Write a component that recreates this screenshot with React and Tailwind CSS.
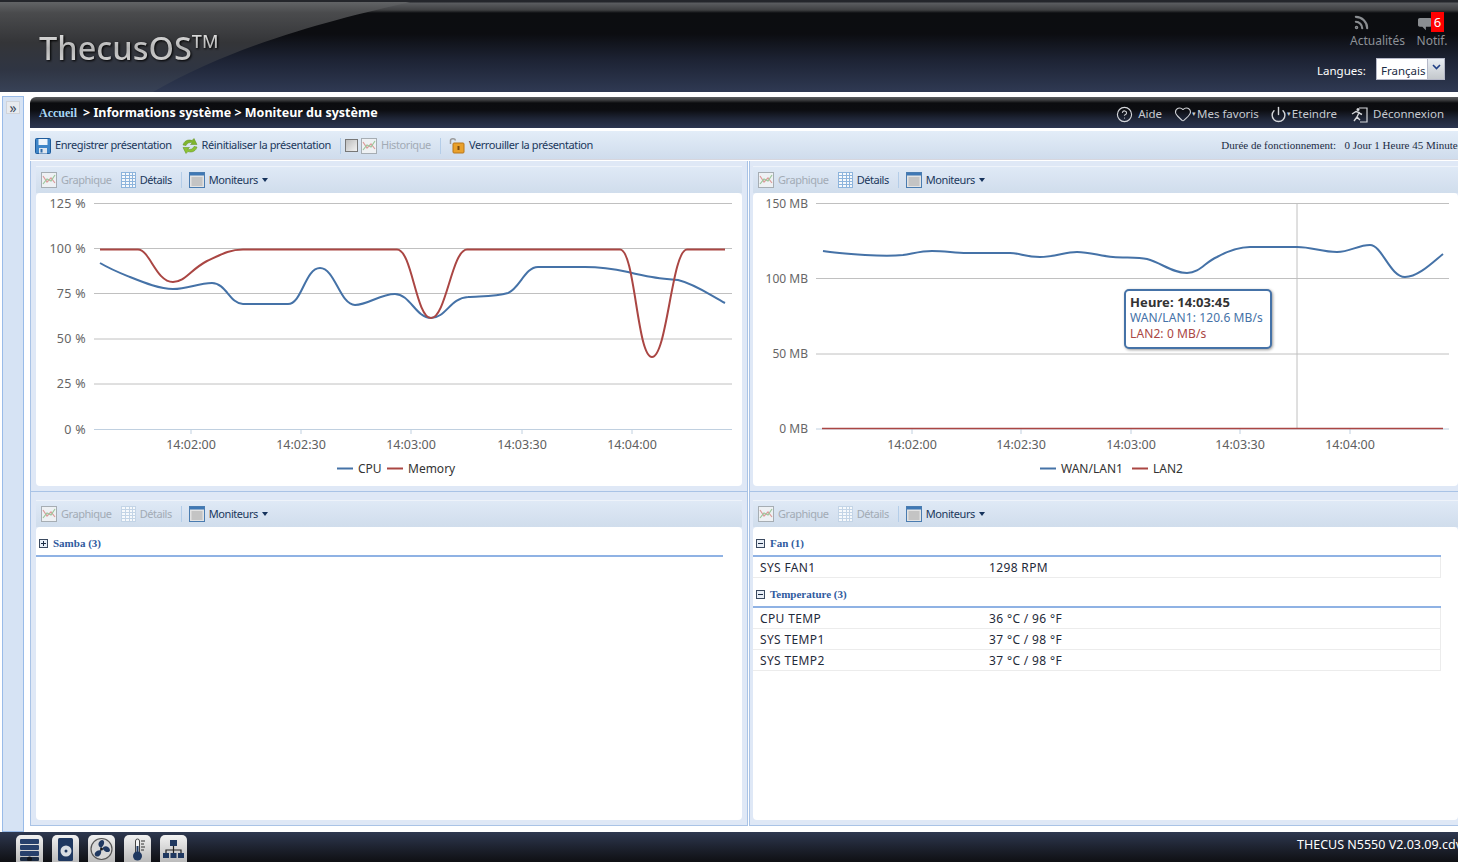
import { CircleHelp, Heart, Power, Rss } from 'lucide-react';

const sans = "[font-family:'Noto_Sans',sans-serif]";

function FloppyIcon() {
  return (
    <svg width="16" height="16" viewBox="0 0 16 16" className="shrink-0">
      <rect x="0.5" y="0.5" width="15" height="15" rx="1" fill="#3f86c8" stroke="#1f5c9c" />
      <rect x="3.5" y="1" width="9" height="6" fill="#eef5fb" />
      <rect x="4" y="10" width="8" height="5.5" fill="#dfe6ee" />
      <rect x="5.5" y="11" width="2" height="3.5" fill="#2f6aa8" />
    </svg>
  );
}

function RefreshIcon() {
  return (
    <svg width="16" height="16" viewBox="0 0 16 16" className="shrink-0">
      <path d="M1 7C2 3 6 1 10 2.5L12 0.5L15 6.5L8.500 6.500L10.300 4.800C7.500 4 5 5 4 7.500Z" fill="#7fb52d" stroke="#5c8f1c" strokeWidth="0.5" />
      <path d="M15 9C14 13 10 15 6 13.500L4 15.500L1 9.500L7.500 9.500L5.700 11.200C8.500 12 11 11 12 8.500Z" fill="#8cc234" stroke="#5c8f1c" strokeWidth="0.5" />
    </svg>
  );
}

function ChartIcon() {
  return (
    <svg width="16" height="16" viewBox="0 0 16 16" className="shrink-0">
      <rect x="0.5" y="0.5" width="15" height="15" fill="#eef1f4" stroke="#a6adb3" />
      <path d="M2 4L6 10L10 6L14 11" fill="none" stroke="#dd9a9a" strokeWidth="1.200" />
      <path d="M2 12L6 7L10 9L14 3" fill="none" stroke="#9cc79c" strokeWidth="1.200" />
    </svg>
  );
}

function GridIcon({ disabled }) {
  const line = disabled ? '#c3d4e6' : '#8db4dc';
  return (
    <svg width="15" height="16" viewBox="0 0 15 16" className="shrink-0">
      <rect x="0.5" y="0.5" width="14" height="15" fill="#f6f9fc" stroke={line} />
      <path d="M0.500 3.500H14.500M0.500 6.500H14.500M0.500 9.500H14.500M0.500 12.500H14.500M4.500 0.500V15.500M8.500 0.500V15.500M11.500 0.500V15.500" stroke={line} />
    </svg>
  );
}

function WindowIcon() {
  return (
    <svg width="16" height="16" viewBox="0 0 16 16" className="shrink-0">
      <rect x="0.5" y="0.5" width="15" height="15" fill="#e3e3e3" stroke="#4a7cb0" />
      <rect x="1" y="1" width="14" height="2.500" fill="#3f78b5" />
      <rect x="2.500" y="5" width="11" height="9" fill="#c4c4c4" />
    </svg>
  );
}

function LockIcon() {
  return (
    <svg width="16" height="17" viewBox="0 0 16 17" className="shrink-0">
      <path d="M1.500 7V3.500C1.500 1.500 6 1 6.500 3.500" fill="none" stroke="#9a9a9a" strokeWidth="1.500" />
      <rect x="4" y="6" width="11" height="10" rx="1" fill="#e9a12c" stroke="#b9761a" />
      <rect x="8.500" y="9" width="2" height="4" fill="#7a4a10" />
    </svg>
  );
}

function ToolButton({ icon, label, disabled, className = '' }) {
  return (
    <div className={`flex items-center gap-[4px] ${className}`}>
      {icon}
      <span className={disabled ? 'text-[#a2abb5]' : 'text-[#20385c]'}>{label}</span>
    </div>
  );
}

function Sep({ className = '' }) {
  return <div className={`h-[16px] w-px bg-[#b4cde8] ${className}`} />;
}

function PanelBar({ graphOn, detailsOn }) {
  return (
    <div className="flex h-[27px] items-center border-t border-[#eef3fa] bg-gradient-to-b from-[#dfe9f6] to-[#d0ddec] pl-[5px] text-[11px] tracking-[-0.45px]">
      <ToolButton icon={<ChartIcon />} label="Graphique" disabled={!graphOn} />
      <ToolButton icon={<GridIcon disabled={!detailsOn} />} label="Détails" disabled={!detailsOn} className="ml-[9px]" />
      <Sep className="ml-[9px]" />
      <ToolButton icon={<WindowIcon />} label="Moniteurs" className="ml-[7px]" />
      <div className="ml-[4px] h-0 w-0 border-x-[3px] border-t-[4px] border-x-transparent border-t-[#15325c]" />
    </div>
  );
}

function Panel({ wide, lower, graphOn, detailsOn, children }) {
  return (
    <div className={`flex flex-col overflow-hidden border-b border-[#a9c3e6] bg-[#dfe8f6] pb-[5px] ${lower ? 'pt-[8px]' : 'pt-[5px]'} ${wide ? 'border-l pl-[3px]' : 'border-x px-[5px]'}`}>
      <PanelBar graphOn={graphOn} detailsOn={detailsOn} />
      <div className="relative min-h-0 flex-1 rounded-[4px] bg-white">{children}</div>
    </div>
  );
}

function Chart({ view, gridX, grid, ticks, crossX, series, legend, axisLeft, axisClass }) {
  return (
    <svg viewBox={view} className="block h-full w-full">
      <g className="text-[12.500px]">
        {grid.map(([y, label]) => (
          <g key={label}>
            <line x1={gridX[0]} x2={gridX[1]} y1={y} y2={y} stroke={label.startsWith('0 ') ? '#c0d0e0' : '#c0c0c0'} />
            <text x={axisLeft} y={y + 4} textAnchor="end" fill="#666666" className={axisClass}>{label}</text>
          </g>
        ))}
        {ticks.map(([x, label]) => (
          <g key={label}>
            <line x1={x} x2={x} y1="429" y2="434" stroke="#c0d0e0" />
            <text x={x} y="449" textAnchor="middle" fill="#606060">{label}</text>
          </g>
        ))}
        {crossX && <line x1={crossX} x2={crossX} y1="203" y2="429" stroke="#c0c0c0" />}
        {series.map((s) => (
          <path key={s.color} d={s.d} fill="none" stroke={s.color} strokeWidth={s.width ?? 2} strokeLinejoin="round" />
        ))}
        {legend.map((l) => (
          <g key={l.label}>
            <line x1={l.x} x2={l.x + 16} y1="468.500" y2="468.500" stroke={l.color} strokeWidth="2" />
            <text x={l.x + 21} y="473" fill="#333333" className="text-[12px]">{l.label}</text>
          </g>
        ))}
      </g>
    </svg>
  );
}

const cpu = 'M100 263C112 270 120 273 130 277C145 283 160 289 173 289C188 289 198 283 212 283C226 283 230 304 243 304L288 304C302 304 305 268 320 268C335 268 340 305 355 305C368 305 380 294 395 294C410 294 416 318 431 318C446 318 450 298 468 297C480 296 495 297 508 293C520 288 525 267 538 267L585 267C600 267 614 269 628 272C640 275 645 276 652 277C662 279 670 279 678 280C695 284 710 295 725 303';
const memory = 'M100 249.500L138 249.500C150 250 156 282 173 282C185 282 190 270 207 261C222 254 230 249.500 243 249.500L397 249.500C412 249.500 416 318 431 318C446 318 452 249.500 467 249.500L620 249.500C635 249.500 637 357 652 357C667 357 672 249.500 687 249.500L725 249.500';
const wan = 'M823 251C835 253 850 254 865 255C880 256 895 256 903 255C915 253 922 251 932 251C945 251 955 253 967 253L1010 253C1020 253 1025 257 1040 257C1055 257 1065 252 1077 252C1090 252 1100 256 1113 257C1125 258 1138 257 1147 259C1162 263 1172 273 1187 273C1200 273 1205 262 1217 257C1228 251 1238 247 1250 247L1297 247C1312 247 1322 252 1337 252C1350 252 1358 245 1370 245C1382 245 1390 277 1405 277C1418 277 1432 263 1443 254';

function Group({ name, open, items, width }) {
  return (
    <div style={{ width }}>
      <div className="flex h-[28px] items-center gap-[5px] pl-[3px] pt-[4px] [font-family:'Liberation_Serif',serif] text-[11px] font-bold text-[#2f5a9e]">
        <span className="relative flex h-[9px] w-[9px] items-center justify-center border border-[#3b4a60] bg-[#e8eef6]">
          <span className="h-px w-[5px] bg-[#1c2c44]" />
          {!open && <span className="absolute h-[5px] w-px bg-[#1c2c44]" />}
        </span>
        <span>{name}</span>
      </div>
      <div className="h-[2px] bg-[#8fb2e4]" />
      {items.map(([label, value]) => (
        <div key={label} className="flex h-[21px] items-center border-b border-r border-[#ececec] pl-[7px] pt-px text-[12px] tracking-[0.35px] text-[#1f2a3a]">
          <span className="w-[229px]">{label}</span>
          <span>{value}</span>
        </div>
      ))}
    </div>
  );
}

function FooterTile({ children }) {
  return (
    <div className="flex h-[30px] w-[27px] justify-center rounded-t-[5px] bg-gradient-to-b from-[#f2f2f2] to-[#b5b5b5] pt-[2px]">
      <svg width="23" height="24" viewBox="0 0 23 24">{children}</svg>
    </div>
  );
}

export default function App() {
  return (
    <div className={`flex h-[862px] w-[1458px] flex-col overflow-hidden bg-white ${sans}`}>
      {/* header */}
      <header className="relative h-[92px] shrink-0 overflow-hidden bg-[linear-gradient(#24262b_0px,#24262b_2px,#5b5d60_3px,#3f4042_10px,#0c0d10_13px,#0c0d11_34px,#1d2334_60px,#2e3851_90px)]">
        <svg className="absolute inset-0" width="420" height="92">
          <defs>
            <linearGradient id="swoosh" x1="0" y1="0" x2="0" y2="1">
              <stop offset="0" stopColor="#626466" />
              <stop offset="0.12" stopColor="#4a4b4d" />
              <stop offset="0.45" stopColor="#343538" />
              <stop offset="0.75" stopColor="#2f3543" />
              <stop offset="1" stopColor="#384257" />
            </linearGradient>
          </defs>
          <path d="M0 2H410C340 18 240 42 153 92H0Z" fill="url(#swoosh)" />
        </svg>
        <div className="absolute left-[39px] top-[26px] flex items-start bg-gradient-to-b from-[#f4f4f4] via-[#b4b4b4] to-[#e4e4e4] bg-clip-text font-medium text-transparent drop-shadow-[1px_1px_1px_#000]">
          <span className="text-[32.500px] leading-[44px]">ThecusOS</span>
          <span className="mt-[4px] text-[18px] leading-[22px]">TM</span>
        </div>
        <div className="absolute left-[1350px] top-[14px] flex w-[54px] flex-col text-[12px] text-[#8d9197]">
          <Rss size={17} strokeWidth={3} className="ml-[3px] text-[#8a8d91]" />
          <span className="mt-px whitespace-nowrap">Actualités</span>
        </div>
        <div className="absolute left-[1416px] top-[12px] flex w-[32px] flex-col items-center text-[12px] text-[#8d9197]">
          <svg width="14" height="15" viewBox="0 0 16 15" className="ml-[-15px] mt-[5px]">
            <path d="M2 0H14C15 0 16 1 16 2V8C16 9 15 10 14 10H9V14L5 10H2C1 10 0 9 0 8V2C0 1 1 0 2 0Z" fill="#8a8d91" />
          </svg>
          <span className="whitespace-nowrap">Notif.</span>
          <span className="absolute left-[15px] top-0 flex h-[20px] w-[13px] items-center justify-center bg-[#ff0000] text-[13px] leading-none text-white">6</span>
        </div>
        <div className="absolute left-[1317px] top-[58px] flex items-center text-[11.500px] text-white">
          <span className="w-[59px] pt-[3px]">Langues:</span>
          <div className="flex h-[22px] w-[69px] border border-[#b5b8c8] bg-white text-[#1c2c44]">
            <span className="flex-1 pl-[4px] pt-[2px] leading-[20px]">Français</span>
            <span className="flex w-[17px] items-start justify-center border-l border-[#b5b8c8] bg-gradient-to-b from-[#e8edf3] to-[#c4c8cc] pt-[5px]">
              <svg width="9" height="6" viewBox="0 0 9 6"><path d="M1 1L4.500 4.500L8 1" fill="none" stroke="#1f3f86" strokeWidth="1.600" /></svg>
            </span>
          </div>
        </div>
      </header>

      <div className="flex min-h-0 flex-1 pt-[4px]">
        {/* collapsed side */}
        <aside className="ml-[2px] h-[736px] w-[22px] shrink-0 border border-[#99bbe8] bg-[#d6e3f4] pl-[3px] pt-[4px]">
          <div className="flex h-[13px] w-[14px] items-center justify-center border border-[#d0d4da] bg-[#e8ebef] text-[14px] leading-none text-[#3c4a5c]">»</div>
        </aside>

        <main className="ml-[6px] flex min-w-0 flex-1 flex-col">
          {/* breadcrumb bar */}
          <div className="mt-[1px] flex h-[31px] shrink-0 items-center rounded-tl-[6px] bg-[linear-gradient(#5a5c5e_0px,#3c3d3f_3px,#0b0c0f_6px,#0c0d11_13px,#1f2638_22px,#2b3550_31px)] pl-[9px] pr-[14px] pt-[1px]">
            <span className="[font-family:'Liberation_Serif',serif] text-[12px] font-bold text-[#a9d8f5]">Accueil</span>
            <span className="ml-[6px] text-[12.500px] font-bold text-white">&gt; Informations système &gt; Moniteur du système</span>
            <div className="ml-auto flex items-center pt-[2px] text-[11.500px] text-[#c6cad0]">
              <CircleHelp size={17} strokeWidth={1.600} className="text-[#d4d6da]" />
              <span className="ml-[5px]">Aide</span>
              <Heart size={18} strokeWidth={1.400} className="ml-[12px] text-[#d4d6da]" />
              <span className="text-[7px]">▾</span>
              <span className="ml-[1px]">Mes favoris</span>
              <Power size={17} strokeWidth={2} className="ml-[11px] text-[#d4d6da]" />
              <span className="text-[7px]">▾</span>
              <span className="ml-[1px]">Eteindre</span>
              <svg width="17" height="17" viewBox="0 0 17 17" className="ml-[14px]">
                <path d="M8 2H16V16H9" fill="none" stroke="#d4d6da" strokeWidth="1.200" />
                <circle cx="7" cy="3.500" r="1.500" fill="#d4d6da" />
                <path d="M1 8L5 5.500L8 6.500L6 11L9 14M6 11L3 15M8 7L11 8.500" fill="none" stroke="#d4d6da" strokeWidth="1.400" />
              </svg>
              <span className="ml-[5px]">Déconnexion</span>
            </div>
          </div>

          {/* tool bar */}
          <div className="mt-[3px] flex h-[29px] shrink-0 items-center whitespace-nowrap border-b border-[#d6d6de] bg-gradient-to-b from-[#e3edf8] to-[#cfdcec] pl-[5px] pt-px text-[11px] tracking-[-0.4px]">
            <ToolButton icon={<FloppyIcon />} label="Enregistrer présentation" />
            <ToolButton icon={<RefreshIcon />} label="Réinitialiser la présentation" className="ml-[10px]" />
            <Sep className="ml-[9px]" />
            <div className="ml-[4px] h-[13px] w-[13px] border border-[#777] bg-gradient-to-br from-[#bdbdbd] to-[#f2f2f2]" />
            <ToolButton icon={<ChartIcon />} label="Historique" disabled className="ml-[3px]" />
            <Sep className="ml-[9px]" />
            <ToolButton icon={<LockIcon />} label="Verrouiller la présentation" className="ml-[8px]" />
            <span className="ml-auto mr-[-4px] shrink-0 whitespace-pre [font-family:'Liberation_Serif',serif] text-[11px] tracking-normal text-[#1c2c44]">
              Durée de fonctionnement:   0 Jour 1 Heure 45 Minutes
            </span>
          </div>

          {/* monitors */}
          <div className="grid h-[666px] shrink-0 grid-cols-[718px_1fr] grid-rows-[331px_334px] gap-x-px pt-px">
            <Panel graphOn={false} detailsOn>
              <Chart
                view="36 193 706 293"
                gridX={[94, 732]}
                axisLeft={86}
                axisClass="tracking-[0.3px]"
                grid={[[203.5, '125 %'], [248.5, '100 %'], [293.5, '75 %'], [339, '50 %'], [384, '25 %'], [429.5, '0 %']]}
                ticks={[[191, '14:02:00'], [301, '14:02:30'], [411, '14:03:00'], [522, '14:03:30'], [632, '14:04:00']]}
                series={[{ d: cpu, color: '#4572a7' }, { d: memory, color: '#aa4643' }]}
                legend={[{ x: 337, label: 'CPU', color: '#4572a7' }, { x: 387, label: 'Memory', color: '#aa4643' }]}
              />
            </Panel>
            <Panel wide graphOn={false} detailsOn>
              <Chart
                view="753 193 705 293"
                gridX={[816, 1449]}
                axisLeft={808}
                axisClass="text-[12px]"
                grid={[[203.5, '150 MB'], [278.5, '100 MB'], [354, '50 MB'], [429, '0 MB']]}
                ticks={[[912, '14:02:00'], [1021, '14:02:30'], [1131, '14:03:00'], [1240, '14:03:30'], [1350, '14:04:00']]}
                crossX={1297}
                series={[{ d: wan, color: '#4572a7' }, { d: 'M822 428.500H1443', color: '#aa4643', width: 1.5 }]}
                legend={[{ x: 1040, label: 'WAN/LAN1', color: '#4572a7' }, { x: 1132, label: 'LAN2', color: '#aa4643' }]}
              />
              <div className="absolute left-[371px] top-[96px] h-[60px] w-[148px] rounded-[5px] border-2 border-[#4572a7] bg-white pl-[4px] pt-[3px] text-[12px] leading-[16px] tracking-[0.1px] shadow-[1px_1px_3px_rgba(0,0,0,0.4)]">
                <div className="text-[13px] font-bold text-[#333333]">Heure: 14:03:45</div>
                <div className="text-[#4572a7]">WAN/LAN1: 120.6 MB/s</div>
                <div className="text-[#aa4643]">LAN2: 0 MB/s</div>
              </div>
            </Panel>
            <Panel lower graphOn={false} detailsOn={false}>
              <Group name="Samba (3)" width={687} items={[]} />
            </Panel>
            <Panel lower wide graphOn={false} detailsOn={false}>
              <Group name="Fan (1)" open width={688} items={[['SYS FAN1', '1298 RPM']]} />
              <Group
                name="Temperature (3)"
                open
                width={688}
                items={[['CPU TEMP', '36 °C / 96 °F'], ['SYS TEMP1', '37 °C / 98 °F'], ['SYS TEMP2', '37 °C / 98 °F']]}
              />
            </Panel>
          </div>
        </main>
      </div>

      {/* footer */}
      <footer className="flex h-[30px] shrink-0 items-start gap-[9px] bg-gradient-to-b from-[#2e3850] to-[#0f1014] pl-[16px] pt-[3px]">
        <FooterTile>
          <rect x="2" y="2" width="19" height="5" rx="1" fill="#27406c" />
          <rect x="2" y="8" width="19" height="5" rx="1" fill="#27406c" />
          <rect x="2" y="14" width="19" height="5" rx="1" fill="#27406c" />
          <rect x="2" y="20" width="19" height="4" rx="1" fill="#1c2c44" />
          <circle cx="11.500" cy="22" r="2.500" fill="#10141c" />
        </FooterTile>
        <FooterTile>
          <rect x="4" y="1" width="15" height="23" rx="1.500" fill="#1f3860" />
          <circle cx="12" cy="14" r="5.500" fill="#d8dde2" />
          <circle cx="12" cy="14" r="1.500" fill="#1f3860" />
        </FooterTile>
        <FooterTile>
          <circle cx="11.500" cy="12" r="10.500" fill="#d8d8d8" stroke="#555" strokeWidth="1.200" />
          <path d="M11 11C7 9 8 4 12 3C15 3 15 8 11 11ZM12.500 11.500C14 8 19 9 20 13C20 16 15 16 12.500 11.500ZM11 13C12 17 9 21 5.500 19C3 16 7 13 11 13Z" fill="#1f3860" />
          <circle cx="11.500" cy="12" r="1.500" fill="#1a1a1a" />
        </FooterTile>
        <FooterTile>
          <rect x="9.500" y="2" width="4" height="16" rx="2" fill="#f4f4f4" stroke="#444" />
          <circle cx="11.500" cy="19" r="4.500" fill="#1f3860" />
          <rect x="10.500" y="9" width="2" height="9" fill="#1f3860" />
          <path d="M15 4H19M15 7H18M15 10H19M15 13H18" stroke="#333" />
        </FooterTile>
        <FooterTile>
          <rect x="8" y="3" width="7" height="6" fill="#1f3860" />
          <path d="M11.500 9V13M4 16V13H19V16M11.500 13V16" fill="none" stroke="#222" strokeWidth="1.200" />
          <rect x="1" y="16" width="6" height="5" fill="#1f3860" />
          <rect x="8.500" y="16" width="6" height="5" fill="#1f3860" />
          <rect x="16" y="16" width="6" height="5" fill="#1f3860" />
        </FooterTile>
        <span className="ml-auto mr-[-4px] mt-[1px] whitespace-nowrap text-[12.500px] text-white">THECUS N5550 V2.03.09.cdv</span>
      </footer>
    </div>
  );
}
